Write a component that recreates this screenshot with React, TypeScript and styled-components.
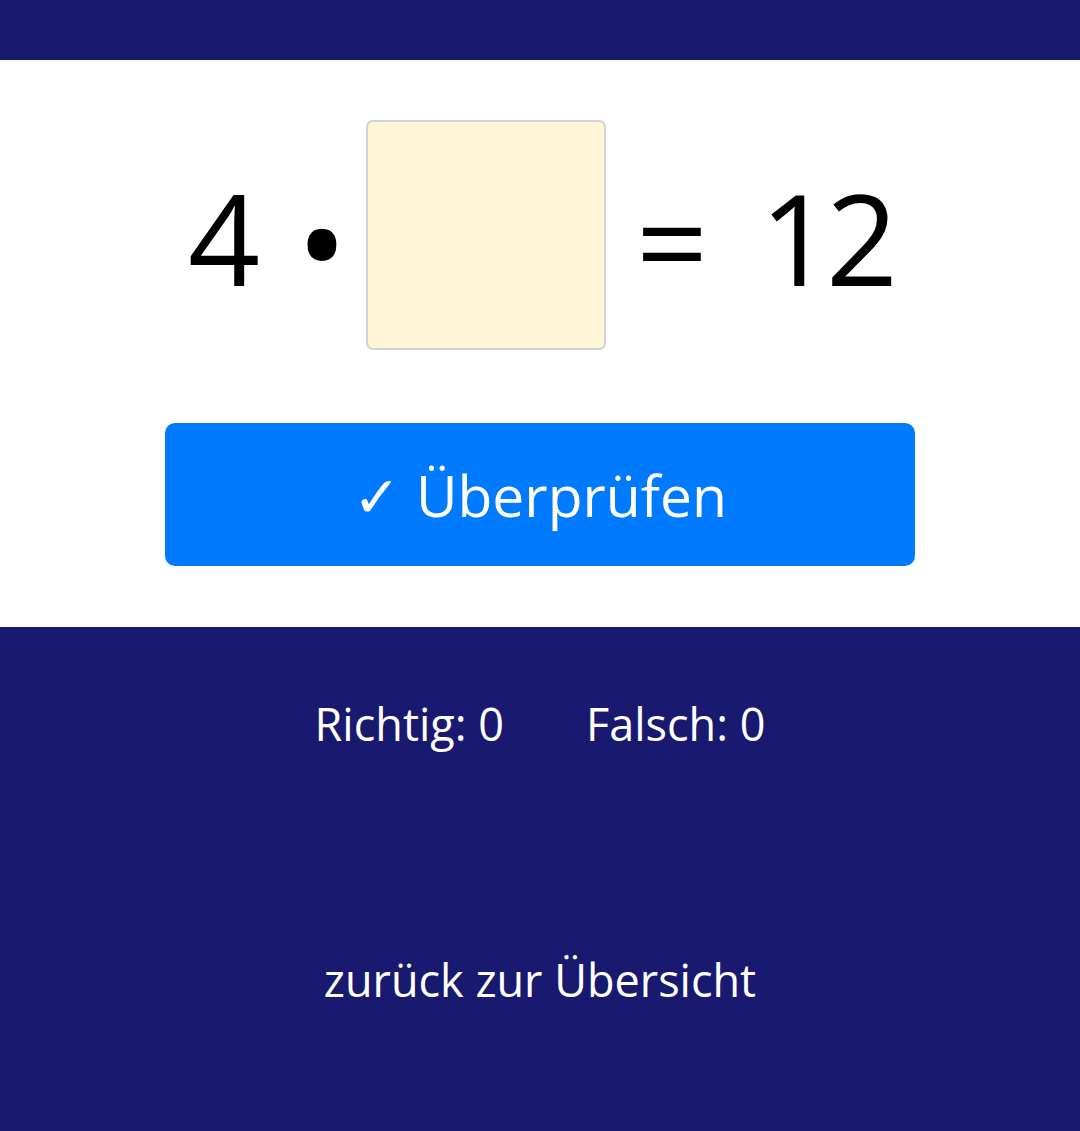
import React from "react";
import styled, { createGlobalStyle } from "styled-components";

const Global = createGlobalStyle`
  html, body {
    margin: 0;
    padding: 0;
    background: #191970;
    font-family: "Open Sans", "Noto Sans", sans-serif;
  }
`;

const Page = styled.div`
  display: flex;
  flex-direction: column;
  min-height: 100vh;
  background: #191970;
`;

const TopBar = styled.header`
  height: 60px;
  background: #191970;
`;

const Exercise = styled.main`
  background: #ffffff;
  height: 567px;
  box-sizing: border-box;
  padding-top: 60px;
  display: flex;
  flex-direction: column;
  align-items: center;
`;

const Equation = styled.div`
  display: flex;
  align-items: center;
  justify-content: center;
  height: 230px;
  color: #000;
`;

const Num = styled.span<{ $m: string }>`
  font-size: 126px;
  line-height: 1;
  letter-spacing: -6px;
  margin: ${(p) => p.$m};
`;

const Op = styled.span<{ $size: number; $m: string }>`
  font-size: ${(p) => p.$size}px;
  line-height: 1;
  margin: ${(p) => p.$m};
`;

const AnswerInput = styled.input`
  box-sizing: border-box;
  width: 240px;
  height: 230px;
  border: 2px solid #ced4da;
  border-radius: 7px;
  background: #fff5d7;
  font-family: inherit;
  font-size: 126px;
  text-align: center;
  outline: none;
  padding: 0;
`;

const CheckButton = styled.button`
  margin-top: 73px;
  width: 750px;
  height: 143px;
  border: none;
  border-radius: 10px;
  background: #007bff;
  color: #ffffff;
  font-family: inherit;
  font-size: 57px;
  cursor: pointer;
  display: flex;
  align-items: center;
  justify-content: center;
  padding: 0;
`;

const Footer = styled.footer`
  flex: 1;
  background: #191970;
  color: #ffffff;
  display: flex;
  flex-direction: column;
  align-items: center;
  padding-top: 66px;
`;

const Scores = styled.div`
  display: flex;
  gap: 82px;
  font-size: 45px;
`;

const BackLink = styled.a`
  margin-top: 195px;
  font-size: 45px;
  color: #ffffff;
  text-decoration: none;
`;

export default function App() {
  return (
    <Page>
      <Global />
      <TopBar />
      <Exercise>
        <Equation>
          <Num $m="4px 0 0 0">4</Num>
          <Op $size={138} $m="12px 18px 0 42px">•</Op>
          <AnswerInput aria-label="Antwort" />
          <Op $size={126} $m="10px 52px 0 30px">=</Op>
          <Num $m="4px 0 0 0">12</Num>
        </Equation>
        <CheckButton>✓ Überprüfen</CheckButton>
      </Exercise>
      <Footer>
        <Scores>
          <span>Richtig: 0</span>
          <span>Falsch: 0</span>
        </Scores>
        <BackLink href="#">zurück zur Übersicht</BackLink>
      </Footer>
    </Page>
  );
}
